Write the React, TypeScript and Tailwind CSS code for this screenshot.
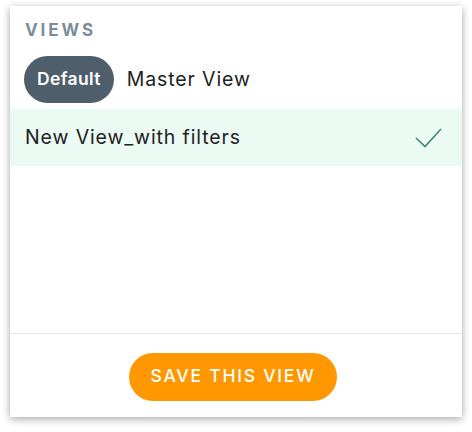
import React from "react";

export default function App() {
  return (
    <div className="w-[472px] h-[432px] bg-white pt-[6px] pl-[10px]" style={{ fontFamily: "Inter, 'Noto Sans', sans-serif" }}>
      <div className="w-[452px] h-[411px] bg-white flex flex-col shadow-[0_2px_8px_rgba(0,0,0,0.35)]">
        <div className="pt-[14px] px-[15px] h-[40px] text-[17px] leading-[20px] font-bold tracking-[0.17em] text-[#7b8d9a]">VIEWS</div>
        <div className="mt-[10px] pl-[14px] flex items-center gap-[13px]">
          <span className="h-[47px] px-[13px] rounded-full bg-[#4e5e6a] text-white text-[17.5px] font-semibold tracking-[0.02em] flex items-center">Default</span>
          <span className="text-[19.5px] text-[#222] tracking-[0.045em]">Master View</span>
        </div>
        <div className="mt-[6px] h-[57px] bg-[#ebfaf3] flex items-center justify-between pl-[15px] pr-[20px]">
          <span className="text-[19.5px] text-[#222] tracking-[0.045em]">New View_with filters</span>
          <svg width="27" height="20" viewBox="0 0 27 20" fill="none">
            <path d="M1 10 L10 18.5 L26 1" stroke="#3b8a68" strokeWidth="1.6" />
          </svg>
        </div>
        <div className="flex-1" />
        <div className="h-[84px] border-t border-[#e3e8eb] flex items-center justify-center pr-[6px] pt-[2px]">
          <button className="w-[208px] h-[48px] rounded-full bg-[#ff9800] text-white text-[17.5px] font-medium tracking-[0.1em]">SAVE THIS VIEW</button>
        </div>
      </div>
    </div>
  );
}
